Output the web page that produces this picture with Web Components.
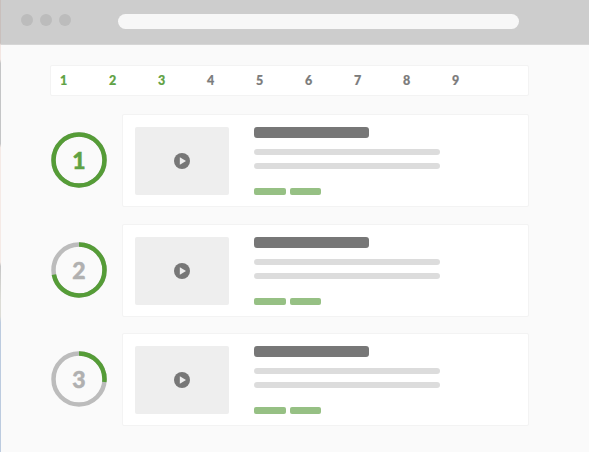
<!DOCTYPE html>
<html>
<head>
<meta charset="utf-8">
<style>
  html, body { margin: 0; height: 100%; }
  body { width: 589px; height: 452px; overflow: hidden; background: #fafafa; font-family: Lato, sans-serif; }
</style>
</head>
<body>
<browser-window>
  <step-nav current="3" total="9"></step-nav>
  <lesson-row num="1" progress="100"></lesson-row>
  <lesson-row num="2" progress="72"></lesson-row>
  <lesson-row num="3" progress="27"></lesson-row>
</browser-window>
<script>
class BrowserWindow extends HTMLElement {
    constructor() {
        super();
        this.attachShadow({ mode: 'open' });
    }
    connectedCallback() {
        this.shadowRoot.innerHTML = `
            <style>
                :host {
                    display: block;
                    height: 452px;
                    box-sizing: border-box;
                    border-left: 1px solid;
                    border-image: linear-gradient(#c9bfbc 0, #c9bfbc 44px, #f3e6e2 46px, #f3e6e2 60px, #c4c5c6 64px, #c4c5c6 144px, #f5eae6 148px, #f5eae6 262px, #c6c6c6 266px, #dcdcd6 300px, #dcdcd6 316px, #bccbdf 322px, #bccbdf 452px) 1;
                }
                header {
                    height: 45px;
                    box-sizing: border-box;
                    background: #cdcdcd;
                    border-bottom: 1px solid #d6d6d6;
                    display: flex;
                    align-items: flex-start;
                    padding: 14px 70px 0 20px;
                }
                .dots { display: flex; gap: 7px; margin-right: 47px; }
                .dots i { width: 12px; height: 12px; border-radius: 50%; background: #bcbcbc; }
                .url { flex: 1; height: 15px; border-radius: 8px; background: #f7f7f7; }
                main { padding: 20px 60px 0 49px; display: flex; flex-direction: column; }
            </style>
            <header>
                <div class="dots"><i></i><i></i><i></i></div>
                <div class="url"></div>
            </header>
            <main><slot></slot></main>
        `;
    }
}

class StepNav extends HTMLElement {
    constructor() {
        super();
        this.attachShadow({ mode: 'open' });
    }
    connectedCallback() {
        const current = +this.getAttribute('current');
        const total = +this.getAttribute('total');
        let items = '';
        for (let i = 1; i <= total; i++) {
            items += `<span class="${i <= current ? 'done' : ''}">${i}</span>`;
        }
        this.shadowRoot.innerHTML = `
            <style>
                :host {
                    display: flex;
                    height: 31px;
                    box-sizing: border-box;
                    background: #fff;
                    border: 1px solid #f3f3f3;
                    border-radius: 2px;
                    align-items: center;
                    padding-left: 9px;
                    margin-bottom: 18px;
                    font: 900 12.5px Lato, sans-serif;
                    -webkit-text-stroke: 0.2px currentColor;
                    color: #7b7b7b;
                }
                span { width: 49px; flex: none; }
                .done { color: #5fa244; }
            </style>
            ${items}
        `;
    }
}

class ProgressRing extends HTMLElement {
    constructor() {
        super();
        this.attachShadow({ mode: 'open' });
    }
    connectedCallback() {
        const pct = +this.getAttribute('progress');
        const full = pct >= 100;
        this.shadowRoot.innerHTML = `
            <style>
                :host {
                    display: block;
                    position: relative;
                    width: 56px;
                    height: 56px;
                    margin-bottom: 1px;
                    font: 900 23px Lato, sans-serif;
                    -webkit-text-stroke: 0.5px currentColor;
                    color: ${full ? '#5fa244' : '#b0b0b0'};
                }
                svg { display: block; }
                span {
                    position: absolute;
                    inset: 0;
                    display: flex;
                    align-items: center;
                    justify-content: center;
                }
            </style>
            <svg width="56" height="56" viewBox="0 0 56 56">
                <circle cx="28" cy="28" r="25.5" fill="none" stroke="#bcbcbc" stroke-width="4.5"/>
                <circle cx="28" cy="28" r="25.5" fill="none" stroke="#559c37" stroke-width="4.5"
                    pathLength="100" stroke-dasharray="${pct} 100" transform="rotate(-90 28 28)"/>
            </svg>
            <span>${this.getAttribute('num')}</span>
        `;
    }
}

class LessonCard extends HTMLElement {
    constructor() {
        super();
        this.attachShadow({ mode: 'open' });
    }
    connectedCallback() {
        this.shadowRoot.innerHTML = `
            <style>
                :host {
                    display: flex;
                    flex: 1;
                    height: 93px;
                    box-sizing: border-box;
                    background: #fff;
                    border: 1px solid #f3f3f3;
                    border-radius: 2px;
                    padding: 12px 0 0 12px;
                }
                .thumb {
                    width: 94px;
                    height: 68px;
                    background: #eeeeee;
                    border-radius: 2px;
                    display: flex;
                    align-items: center;
                    justify-content: center;
                    margin-right: 25px;
                }
                .title { width: 115px; height: 11px; background: #777; border-radius: 3px; margin-bottom: 11px; }
                .line { width: 186px; height: 6px; background: #dcdcdc; border-radius: 3px; margin-bottom: 8px; }
                .tags { display: flex; gap: 4px; margin-top: 19px; }
                .tags i { width: 32px; height: 7px; background: #96c084; border-radius: 2px; }
                .tags i + i { width: 31px; }
            </style>
            <div class="thumb">
                <svg width="16" height="16" viewBox="0 0 16 16">
                    <circle cx="8" cy="8" r="8" fill="#777"/>
                    <path d="M5.8 4.3 L12 8 L5.8 11.7 Z" fill="#eee"/>
                </svg>
            </div>
            <div>
                <div class="title"></div>
                <div class="line"></div>
                <div class="line"></div>
                <div class="tags"><i></i><i></i></div>
            </div>
        `;
    }
}

class LessonRow extends HTMLElement {
    constructor() {
        super();
        this.attachShadow({ mode: 'open' });
    }
    connectedCallback() {
        this.shadowRoot.innerHTML = `
            <style>
                :host { display: flex; align-items: center; gap: 15px; margin-bottom: 16.5px; padding-left: 1px; }
            </style>
            <progress-ring num="${this.getAttribute('num')}" progress="${this.getAttribute('progress')}"></progress-ring>
            <lesson-card></lesson-card>
        `;
    }
}

customElements.define('browser-window', BrowserWindow);
customElements.define('step-nav', StepNav);
customElements.define('progress-ring', ProgressRing);
customElements.define('lesson-card', LessonCard);
customElements.define('lesson-row', LessonRow);
</script>
</body>
</html>
